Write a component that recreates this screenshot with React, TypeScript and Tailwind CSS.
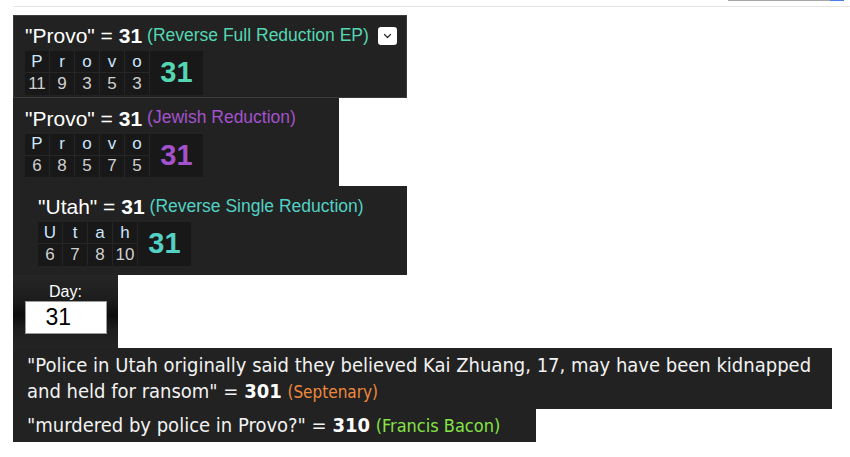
import React from 'react';

type Cell = { ch: string; val: number };

interface GemProps {
  word: string;
  total: number;
  cipher: string;
  color: string;
  cells: Cell[];
  indent?: boolean;
  bordered?: boolean;
  showMenu?: boolean;
}

const sans = { fontFamily: '"Liberation Sans", Arial, sans-serif' };
const narrow = { fontFamily: '"Liberation Sans Narrow", "Arial Narrow", "DejaVu Sans Condensed", sans-serif' };

function Chevron() {
  return (
    <svg width="9" height="6" viewBox="0 0 9 6" fill="none">
      <path d="M1.5 1.5 L4.5 4.5 L7.5 1.5" stroke="#333" strokeWidth="1.3" strokeLinecap="round" strokeLinejoin="round" />
    </svg>
  );
}

function GemBlock({ word, total, cipher, color, cells, indent, bordered, showMenu }: GemProps) {
  return (
    <div
      className={`w-fit bg-[#222222] ${bordered ? 'border border-[#3c3c3c] pl-[11px] pr-[9px] pt-[4px] pb-[2px]' : indent ? 'pl-[25px] pr-[15px] pt-[5px] pb-[9px]' : 'pl-[12px] pr-[15px] pt-[5px] pb-[9px]'}`}
    >
      {/* header */}
      <div className="flex items-center h-[31px] whitespace-nowrap">
        <span className="text-[21px] text-white leading-none">
          "{word}" = <b>{total}</b>
        </span>
        <span className="text-[17.5px] ml-[5px] leading-none" style={{ color }}>
          ({cipher})
        </span>
        <span
          className={`ml-[9px] w-[19px] h-[18px] rounded-[3px] bg-white flex items-center justify-center ${showMenu ? '' : 'invisible'}`}
        >
          <Chevron />
        </span>
      </div>

      {/* breakdown table */}
      <div className="flex w-fit bg-[#181818]">
        <div className="flex">
          {cells.map((c, i) => (
            <div key={i} className="flex flex-col">
              <div className="w-[25px] h-[22px] flex items-center justify-center text-[17px] text-[#cfe6ff] border-r border-b border-[#262626]">
                {c.ch}
              </div>
              <div className="w-[25px] h-[21px] flex items-center justify-center text-[17px] text-[#d0d0d0] border-r border-[#262626]">
                {c.val}
              </div>
            </div>
          ))}
        </div>
        <div className="w-[53px] flex items-center justify-center text-[29px] font-bold" style={{ color }}>
          {total}
        </div>
      </div>
    </div>
  );
}

export default function App() {
  return (
    <div className="w-[850px] h-[457px] bg-white overflow-hidden" style={sans}>
      {/* top strip */}
      <div className="h-[7px] ml-[13px] border-b border-[#e4e4e4] flex items-start">
        <div className="ml-[715px] w-[102px] h-[1px] bg-[#a8a8a8]" />
        <div className="w-[14px] h-[1px] bg-[#4b7bec]" />
      </div>

      <div className="ml-[13px] mt-[8px] flex flex-col">
        <GemBlock
          word="Provo"
          total={31}
          cipher="Reverse Full Reduction EP"
          color="#55d6b2"
          bordered
          showMenu
          cells={[
            { ch: 'P', val: 11 },
            { ch: 'r', val: 9 },
            { ch: 'o', val: 3 },
            { ch: 'v', val: 5 },
            { ch: 'o', val: 3 },
          ]}
        />
        <GemBlock
          word="Provo"
          total={31}
          cipher="Jewish Reduction"
          color="#a352cc"
          cells={[
            { ch: 'P', val: 6 },
            { ch: 'r', val: 8 },
            { ch: 'o', val: 5 },
            { ch: 'v', val: 7 },
            { ch: 'o', val: 5 },
          ]}
        />
        <GemBlock
          word="Utah"
          total={31}
          cipher="Reverse Single Reduction"
          color="#52d1c4"
          indent
          cells={[
            { ch: 'U', val: 6 },
            { ch: 't', val: 7 },
            { ch: 'a', val: 8 },
            { ch: 'h', val: 10 },
          ]}
        />

        {/* day box */}
        <div className="w-[105px] h-[73px] flex flex-col items-center pt-[8px] bg-[linear-gradient(to_bottom,#262626_0%,#1c1c1c_35%,#0e0e0e_55%,#1e1e1e_75%,#242424_100%)]">
          <div className="text-[16px] text-white leading-[18px]">Day:</div>
          <div className="w-[82px] h-[33px] bg-white border border-[#9a9a9a] text-[23px] text-black leading-[31px] pl-[20px]">
            31
          </div>
        </div>

        {/* phrase 1 */}
        <div className="w-[819px] bg-[#222222] pl-[14px] pr-[10px] pt-[4px] pb-[4px] text-[20px] text-[#f2f2f2] leading-[26px]" style={narrow}>
          "Police in Utah originally said they believed Kai Zhuang, 17, may have been kidnapped and held for ransom" ={' '}
          <b className="text-white">301</b>{' '}
          <span className="text-[17px] text-[#f0893d]">(Septenary)</span>
        </div>

        {/* phrase 2 */}
        <div className="w-[523px] h-[33px] bg-[#222222] pl-[14px] flex items-center text-[20px] text-[#f2f2f2] whitespace-nowrap" style={narrow}>
          "murdered by police in Provo?" =&nbsp;<b className="text-white">310</b>&nbsp;
          <span className="text-[18px] text-[#84e446]">(Francis Bacon)</span>
        </div>
      </div>
    </div>
  );
}
